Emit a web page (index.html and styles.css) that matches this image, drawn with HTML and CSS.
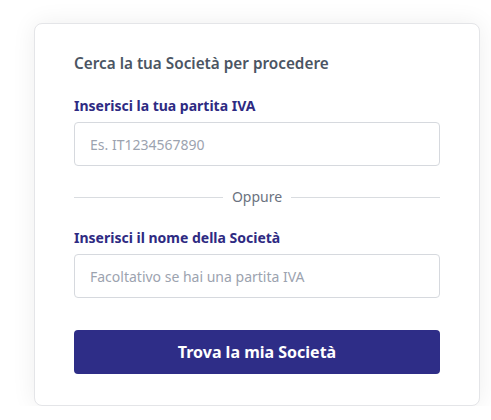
FILE: index.html
```html
<!DOCTYPE html>
<html lang="it">
<head>
<meta charset="utf-8">
<title>Cerca la tua Società</title>
<link rel="stylesheet" href="styles.css">
</head>
<body>
<div class="card">
  <h2 class="title">Cerca la tua Società per procedere</h2>
  <div class="field">
    <label class="label" for="piva">Inserisci la tua partita IVA</label>
    <input class="input" id="piva" type="text" placeholder="Es. IT1234567890">
  </div>
  <div class="divider"><span class="line"></span><span class="or">Oppure</span><span class="line"></span></div>
  <div class="field">
    <label class="label" for="nome">Inserisci il nome della Società</label>
    <input class="input" id="nome" type="text" placeholder="Facoltativo se hai una partita IVA">
  </div>
  <button class="btn" type="button">Trova la mia Società</button>
</div>
</body>
</html>
```
FILE: styles.css
```css
* { box-sizing: border-box; }
html, body { margin: 0; }
body {
  background: #ffffff;
  font-family: "Noto Sans", "Open Sans", sans-serif;
  padding: 23px 0 0 34px;
}
.card {
  width: 446px;
  background: #fff;
  border: 1px solid #e4e5e8;
  border-radius: 8px;
  box-shadow: 0 0 24px rgba(0, 0, 0, 0.07);
  padding: 27px 39px 31px;
  display: flex;
  flex-direction: column;
}
.title {
  margin: 0 0 21px;
  font-size: 15.3px;
  line-height: 24px;
  font-weight: 600;
  color: #4b5563;
}
.field {
  display: flex;
  flex-direction: column;
  gap: 6px;
}
.label {
  font-size: 14px;
  line-height: 20px;
  font-weight: 700;
  color: #2e2a82;
}
.input {
  height: 44px;
  width: 100%;
  border: 1px solid #d6d9de;
  border-radius: 4px;
  padding: 0 15px;
  font-family: inherit;
  font-size: 14px;
  color: #374151;
  background: #fff;
  outline: none;
}
.input::placeholder { color: #9ca3af; }
.divider {
  display: flex;
  align-items: center;
  gap: 9px;
  margin: 21px 0 21px;
  height: 20px;
}
.line {
  flex: 1;
  height: 1px;
  background: #d9dce0;
}
.or {
  font-size: 14px;
  line-height: 20px;
  color: #6b7280;
}
.btn {
  margin-top: 32px;
  height: 44px;
  width: 100%;
  border: none;
  border-radius: 4px;
  background: #2e2d87;
  color: #fff;
  font-family: inherit;
  font-size: 16px;
  font-weight: 700;
  cursor: pointer;
}
```
